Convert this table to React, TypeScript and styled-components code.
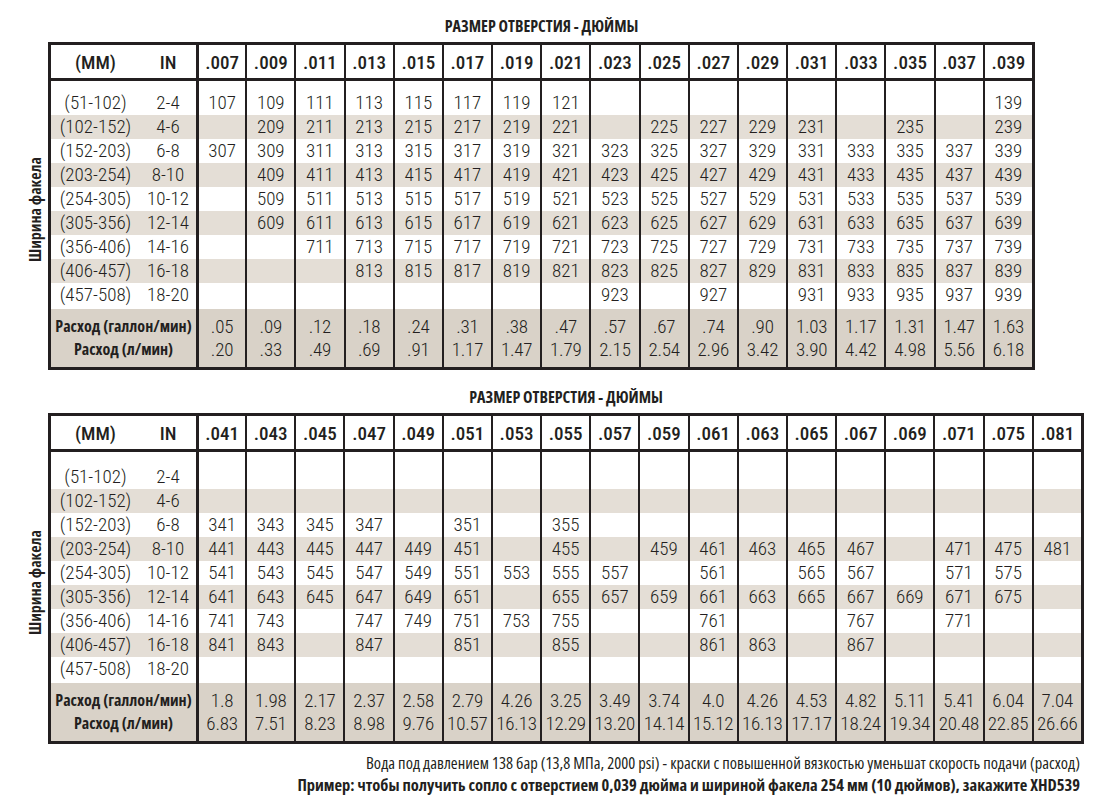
import React from "react";
import styled, { createGlobalStyle } from "styled-components";

const INK = "#231f20";

const GlobalStyle = createGlobalStyle`
  *, *::before, *::after { box-sizing: border-box; }
  body {
    margin: 0;
    background: #fff;
    color: ${INK};
    font-family: "Roboto Condensed", Roboto, sans-serif;
  }
`;

const Page = styled.div`
  width: 1102px;
  padding-top: 15px;
`;

const Section = styled.section`
  display: grid;
  grid-template-columns: 48px auto;
  justify-content: start;

  & + & {
    margin-top: 16px;
  }
`;

const Title = styled.h2`
  grid-column: 2;
  margin: 0 0 5px;
  text-align: center;
  font-family: "Open Sans", sans-serif;
  font-stretch: 75%;
  font-weight: 700;
  font-size: 16px;
  line-height: 22px;
  text-transform: uppercase;
`;

const SideLabel = styled.div`
  grid-column: 1;
  grid-row: 2;
  display: flex;
  align-items: center;
  justify-content: flex-end;
  padding: 8px 5px 0 0;
`;

const SideText = styled.span`
  writing-mode: vertical-rl;
  transform: rotate(180deg);
  white-space: nowrap;
  font-family: "Open Sans", sans-serif;
  font-stretch: 75%;
  font-weight: 700;
  font-size: 16px;
  line-height: 16px;
`;

const Table = styled.table<{ $width: number }>`
  grid-column: 2;
  grid-row: 2;
  width: ${(p) => p.$width}px;
  table-layout: fixed;
  border-collapse: separate;
  border-spacing: 0;
  border: 3px solid ${INK};
`;

const MmCol = styled.col`
  width: 89px;
`;

const InCol = styled.col`
  width: 56px;
`;

type Edge = "none" | "thick" | "thin";

const edgeWidth = (e: Edge) => (e === "thick" ? 3 : e === "thin" ? 2 : 0);

const HeadCell = styled.th<{ $edge: Edge }>`
  height: 36px;
  padding: 2px 0 0;
  text-align: center;
  font-weight: 500;
  font-size: 19px;
  line-height: 1;
  border-bottom: 3px solid ${INK};
  border-left: ${(p) => edgeWidth(p.$edge)}px solid ${INK};
`;

type Tone = "white" | "stripe" | "total";

const toneColor: Record<Tone, string> = {
  white: "#ffffff",
  stripe: "#e4ded6",
  total: "#d9d2c8",
};

const Row = styled.tr<{ $tone: Tone; $padTop?: number; $padBottom?: number }>`
  background: ${(p) => toneColor[p.$tone]};

  & > td {
    padding-top: ${(p) => p.$padTop ?? 0}px;
    padding-bottom: ${(p) => p.$padBottom ?? 0}px;
  }
`;

const Cell = styled.td<{ $edge: Edge }>`
  height: 24px;
  text-align: center;
  white-space: nowrap;
  font-weight: 300;
  font-size: 19px;
  line-height: 24px;
  border-left: ${(p) => edgeWidth(p.$edge)}px solid ${INK};
`;

const TotalCell = styled(Cell)`
  height: 23px;
  line-height: 23px;
  letter-spacing: -0.2px;
`;

const TotalLabel = styled.td`
  text-align: center;
  white-space: nowrap;
  font-family: "Open Sans", sans-serif;
  font-stretch: 75%;
  font-weight: 700;
  font-size: 16px;
  line-height: 23px;
`;

const Notes = styled.div`
  width: 1080px;
  margin-top: 8px;
  text-align: right;
  font-family: "Open Sans", sans-serif;
  font-stretch: 75%;
`;

const NoteLine = styled.p<{ $bold?: boolean }>`
  margin: 0;
  font-weight: ${(p) => (p.$bold ? 700 : 400)};
  font-size: 16.5px;
  line-height: 22px;
  white-space: nowrap;
`;

const mmRanges = [
  "(51-102)",
  "(102-152)",
  "(152-203)",
  "(203-254)",
  "(254-305)",
  "(305-356)",
  "(356-406)",
  "(406-457)",
  "(457-508)",
];

const inRanges = ["2-4", "4-6", "6-8", "8-10", "10-12", "12-14", "14-16", "16-18", "18-20"];

type Chart = {
  width: number;
  bodyTop: number;
  sizes: string[];
  rows: string[][];
  gpm: string[];
  lpm: string[];
};

const row = (s: string) => s.split(",").map((v) => v.trim());

const chartA: Chart = {
  width: 987,
  bodyTop: 10,
  sizes: row(".007,.009,.011,.013,.015,.017,.019,.021,.023,.025,.027,.029,.031,.033,.035,.037,.039"),
  rows: [
    row("107,109,111,113,115,117,119,121,,,,,,,,,139"),
    row(",209,211,213,215,217,219,221,,225,227,229,231,,235,,239"),
    row("307,309,311,313,315,317,319,321,323,325,327,329,331,333,335,337,339"),
    row(",409,411,413,415,417,419,421,423,425,427,429,431,433,435,437,439"),
    row(",509,511,513,515,517,519,521,523,525,527,529,531,533,535,537,539"),
    row(",609,611,613,615,617,619,621,623,625,627,629,631,633,635,637,639"),
    row(",,711,713,715,717,719,721,723,725,727,729,731,733,735,737,739"),
    row(",,,813,815,817,819,821,823,825,827,829,831,833,835,837,839"),
    row(",,,,,,,,923,,927,,931,933,935,937,939"),
  ],
  gpm: row(".05,.09,.12,.18,.24,.31,.38,.47,.57,.67,.74,.90,1.03,1.17,1.31,1.47,1.63"),
  lpm: row(".20,.33,.49,.69,.91,1.17,1.47,1.79,2.15,2.54,2.96,3.42,3.90,4.42,4.98,5.56,6.18"),
};

const chartB: Chart = {
  width: 1036,
  bodyTop: 13,
  sizes: row(".041,.043,.045,.047,.049,.051,.053,.055,.057,.059,.061,.063,.065,.067,.069,.071,.075,.081"),
  rows: [
    row(",,,,,,,,,,,,,,,,,"),
    row(",,,,,,,,,,,,,,,,,"),
    row("341,343,345,347,,351,,355,,,,,,,,,,"),
    row("441,443,445,447,449,451,,455,,459,461,463,465,467,,471,475,481"),
    row("541,543,545,547,549,551,553,555,557,,561,,565,567,,571,575,"),
    row("641,643,645,647,649,651,,655,657,659,661,663,665,667,669,671,675,"),
    row("741,743,,747,749,751,753,755,,,761,,,767,,771,,"),
    row("841,843,,847,,851,,855,,,861,863,,867,,,,"),
    row(",,,,,,,,,,,,,,,,,"),
  ],
  gpm: row("1.8,1.98,2.17,2.37,2.58,2.79,4.26,3.25,3.49,3.74,4.0,4.26,4.53,4.82,5.11,5.41,6.04,7.04"),
  lpm: row("6.83,7.51,8.23,8.98,9.76,10.57,16.13,12.29,13.20,14.14,15.12,16.13,17.17,18.24,19.34,20.48,22.85,26.66"),
};

const dataEdge = (i: number): Edge => (i === 0 ? "thick" : "thin");

function NozzleChart({ chart }: { chart: Chart }) {
  const last = chart.rows.length - 1;
  return (
    <Section>
      <Title>Размер отверстия - дюймы</Title>
      <SideLabel>
        <SideText>Ширина факела</SideText>
      </SideLabel>
      <Table $width={chart.width}>
        <colgroup>
          <MmCol />
          <InCol />
          {chart.sizes.map((s) => (
            <col key={s} />
          ))}
        </colgroup>
        <thead>
          <tr>
            <HeadCell $edge="none">(MM)</HeadCell>
            <HeadCell $edge="none">IN</HeadCell>
            {chart.sizes.map((s, i) => (
              <HeadCell key={s} $edge={dataEdge(i)}>
                {s}
              </HeadCell>
            ))}
          </tr>
        </thead>
        <tbody>
          {chart.rows.map((values, r) => (
            <Row
              key={mmRanges[r]}
              $tone={r % 2 === 1 ? "stripe" : "white"}
              $padTop={r === 0 ? chart.bodyTop : 0}
              $padBottom={r === last ? 2 : 0}
            >
              <Cell $edge="none">{mmRanges[r]}</Cell>
              <Cell $edge="none">{inRanges[r]}</Cell>
              {values.map((v, i) => (
                <Cell key={i} $edge={dataEdge(i)}>
                  {v}
                </Cell>
              ))}
            </Row>
          ))}
          <Row $tone="total" $padTop={6}>
            <TotalLabel colSpan={2}>Расход (галлон/мин)</TotalLabel>
            {chart.gpm.map((v, i) => (
              <TotalCell key={i} $edge={dataEdge(i)}>
                {v}
              </TotalCell>
            ))}
          </Row>
          <Row $tone="total" $padBottom={6}>
            <TotalLabel colSpan={2}>Расход (л/мин)</TotalLabel>
            {chart.lpm.map((v, i) => (
              <TotalCell key={i} $edge={dataEdge(i)}>
                {v}
              </TotalCell>
            ))}
          </Row>
        </tbody>
      </Table>
    </Section>
  );
}

export default function App() {
  return (
    <>
      <GlobalStyle />
      <Page>
        <NozzleChart chart={chartA} />
        <NozzleChart chart={chartB} />
        <Notes>
          <NoteLine>
            Вода под давлением 138 бар (13,8 МПа, 2000 psi) - краски с повышенной вязкостью уменьшат скорость
            подачи (расход)
          </NoteLine>
          <NoteLine $bold>
            Пример: чтобы получить сопло с отверстием 0,039 дюйма и шириной факела 254 мм (10 дюймов), закажите
            XHD539
          </NoteLine>
        </Notes>
      </Page>
    </>
  );
}
